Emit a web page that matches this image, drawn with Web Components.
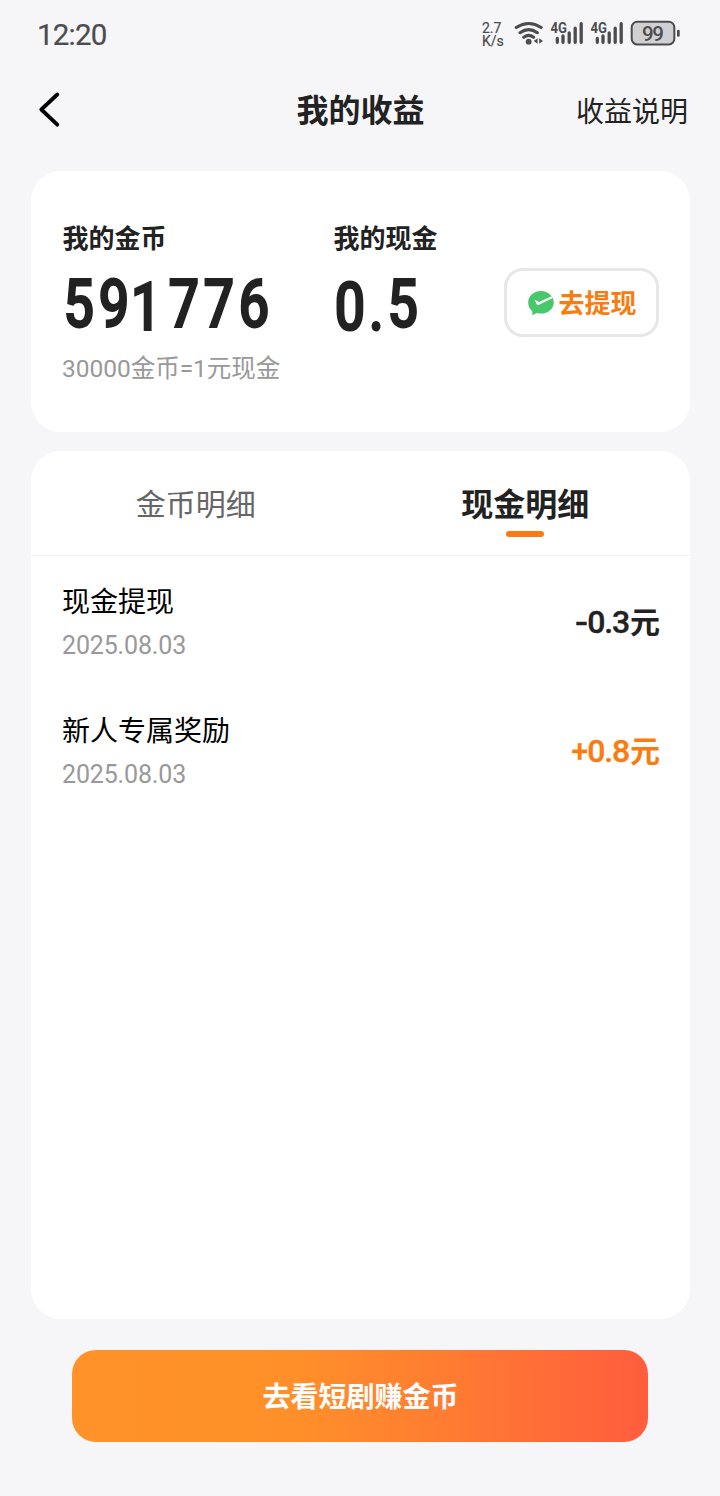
<!DOCTYPE html>
<html lang="zh-CN">
<head>
<meta charset="utf-8">
<title>我的收益</title>
<style>
html,body{margin:0;height:100%}
body{background:#f6f6f9;font-family:Roboto,"Noto Sans CJK SC",sans-serif;color:#222}
</style>
</head>
<body>
<earnings-page></earnings-page>
<script>
const define=(name,html,setup)=>{
  const t=document.createElement('template');
  t.innerHTML=html;
  customElements.define(name,class extends HTMLElement{
    constructor(){super();this.attachShadow({mode:'open'}).append(t.content.cloneNode(true));}
    connectedCallback(){if(setup)setup(this,this.shadowRoot);}
  });
};

define('signal-bars',`<style>:host{display:block;width:34px;height:24px}svg{display:block}</style>
<svg width="34" height="24" viewBox="0 0 34 24">
<text x="0.5" y="13" font-family="Roboto,sans-serif" font-weight="700" font-size="15" textLength="16.5" lengthAdjust="spacingAndGlyphs" fill="#4c4c4e">4G</text>
<g stroke="#4c4c4e" stroke-width="3.3" stroke-linecap="round"><path d="M7.300 18.500V22.300M13 15.800V22.300M19.200 12.800V22.300M25.200 8.200V22.300M31.200 3.600V22.300"/></g>
</svg>`);

define('status-bar',`<style>
:host{display:flex;height:68px;box-sizing:border-box;padding:0 39px 0 37px;justify-content:space-between;color:#4c4c4e}
.time{font-size:29.5px;line-height:70px;letter-spacing:-.8px;-webkit-text-stroke:.2px #4c4c4e}
.right{display:flex;padding-top:20px}
.speed{width:32px;font-size:14px;line-height:13px;padding-top:2px;-webkit-text-stroke:.2px #4c4c4e}
signal-bars{margin-right:6px}
svg{display:block}
</style>
<div class="time">12:20</div>
<div class="right">
<div class="speed">2.7<br>K/s</div>
<svg width="36" height="27" viewBox="0 0 36 27"><g fill="none" stroke="#4c4c4e" stroke-width="3.1" stroke-linecap="round"><path d="M2.2 7.500Q14.700-.5 27.200 7.500M6 12.700Q14.700 6.500 23.400 12.700M9.800 17.300Q14.700 13.500 19.600 17.300"/></g><circle cx="14.700" cy="21.700" r="2.900" fill="#4c4c4e"/><path fill="#4c4c4e" d="M19.700 21 23.600 18.300V23.800ZM29 21 25.200 18.300V23.800Z"/></svg>
<signal-bars></signal-bars><signal-bars></signal-bars>
<svg width="51" height="28" viewBox="0 0 51 28"><rect x="1.700" y="1.800" width="42.600" height="22.600" rx="5.500" fill="#d0d0d2" stroke="#4c4c4e" stroke-width="2"/><rect x="47" y="9.800" width="2.700" height="7" rx="1.200" fill="#4c4c4e"/><text x="12" y="20.600" font-family="Roboto,sans-serif" font-size="20.500" font-weight="500" textLength="22" fill="#4c4c4e">99</text></svg>
</div>`);

define('nav-bar',`<style>
:host{display:grid;grid-template-columns:180px 1fr 180px;align-items:center;height:84px;padding:0 32px 0 31px}
svg{display:block}
h1{margin:1px 0 0 2px;text-align:center;font-size:32px;font-weight:700;line-height:48px}
.help{margin-top:5px;text-align:right;font-size:28px;line-height:42px}
</style>
<svg width="36" height="48" viewBox="0 0 36 48"><path d="M26.300 8.500 10.300 23.500 26.300 38.700" fill="none" stroke="#000" stroke-width="3.800" stroke-linecap="round" stroke-linejoin="round"/></svg>
<h1><slot></slot></h1><div class="help"><slot name="help"></slot></div>`);

define('big-number',`<style>
:host{display:flex;height:60px;font-weight:500;font-size:67px;line-height:60px;color:#222}
span{display:flex;justify-content:center;width:35.100px}
i{font-style:normal;-webkit-text-stroke:1.8px #222;transform:scaleX(.81)}
.low i{transform:translateY(3px) scaleX(.81)}
.one i{transform:translate(-3px,3px) scaleX(.81)}
.dot{width:18px}
</style>`,(el,root)=>{
  for(const c of el.getAttribute('value')||''){
    const s=document.createElement('span'),i=document.createElement('i');
    i.textContent=c;s.append(i);
    if(c==='0')s.className='low';
    if(c==='1')s.className='one';
    if(c==='.')s.className='low dot';
    root.append(s);
  }
});

define('balance-item',`<style>
:host{display:block}
.label{font-size:26px;line-height:39px;font-weight:700;height:39px;padding-top:2px;margin-left:-.5px}
.value{margin:15px 0 0 -1.500px;height:60px}
.note{margin:17px 0 0 -1px;font-size:24.5px;line-height:36px;color:#999;white-space:nowrap;letter-spacing:-.03px}
</style>
<div class="label"><slot></slot></div><div class="value"></div><div class="note"><slot name="note"></slot></div>`,(el,root)=>{
  const b=document.createElement('big-number');
  b.setAttribute('value',el.getAttribute('value'));
  root.querySelector('.value').append(b);
});

define('withdraw-button',`<style>
:host{display:flex;box-sizing:border-box;width:155px;height:69px;border:3px solid #e7e7e7;border-radius:19px;align-items:center;justify-content:center;gap:4px;color:#f97c10;font-size:26px;font-weight:700;line-height:38px;padding-left:2px}
svg{display:block}
span{padding-top:3px}
</style>
<svg width="26" height="26" viewBox="0 0 26 26"><path fill="#47c86b" d="M13 1C5.800 1 .2 5.900.2 12.500c0 3.700 1.600 6.600 4 8.600L4.400 25.200l4.400-2.200c1.300.4 2.700.6 4.200.6 7.200 0 12.800-4.900 12.800-11.100S20.200 1 13 1Z"/><path fill="#fff" d="M6.600 9.700 11.100 11.900 24.300 6 25.200 7.700 11 14.700Q9.500 15.500 8.600 14Z"/></svg>
<span><slot></slot></span>`);

define('balance-card',`<style>
:host{display:grid;grid-template-columns:271px 1fr 155px;box-sizing:border-box;height:261px;padding:47px 31px 0 32px;border-radius:30px;background:#fff}
withdraw-button{margin-top:50px}
</style>
<balance-item value="591776">我的金币<span slot="note">30000金币=1元现金</span></balance-item>
<balance-item value="0.5">我的现金</balance-item>
<withdraw-button>去提现</withdraw-button>`);

define('tab-item',`<style>
:host{display:flex;flex-direction:column;align-items:center;padding-top:31px;font-size:30px;line-height:46px;color:#666}
:host([active]){font-size:32px;font-weight:700;color:#222}
i{display:none;width:38px;height:6px;border-radius:3px;background:#f97c10;margin-top:3px}
:host([active]) i{display:block}
</style><slot></slot><i></i>`);

define('record-row',`<style>
:host{display:flex;justify-content:space-between;align-items:center;height:129px;padding:0 30px 0 31px}
.title{font-size:28px;line-height:42px;color:#000;padding-top:2px}
.date{font-size:25px;line-height:36px;margin-top:4px;color:#999;letter-spacing:-.15px}
.sum{font-size:30px;line-height:44px;font-weight:700;padding-top:2px}
:host([plus]) .sum{color:#f97c10}
.num{font-size:32px;font-weight:500;letter-spacing:-1.200px;margin-right:1px;-webkit-text-stroke:.4px currentColor}
.minus{display:inline-block;transform:scaleX(1.200);margin-right:2px}
:host([plus]) .minus{transform:scaleX(.93);margin-right:0}
</style><div><div class="title"><slot></slot></div><div class="date"><slot name="date"></slot></div></div>
<div class="sum"><span class="num"><span class="minus"><slot name="sign"></slot></span><slot name="num"></slot></span>元</div>`);

define('records-card',`<style>
:host{display:block;box-sizing:border-box;height:868px;margin-top:19px;border-radius:30px;background:#fff}
.tabs{display:grid;grid-template-columns:1fr 1fr;height:104px;border-bottom:1px solid #f1f1f2;margin-bottom:1px}
</style>
<div class="tabs"><tab-item>金币明细</tab-item><tab-item active>现金明细</tab-item></div>
<record-row>现金提现<span slot="date">2025.08.03</span><span slot="sign">-</span><span slot="num">0.3</span></record-row>
<record-row plus>新人专属奖励<span slot="date">2025.08.03</span><span slot="sign">+</span><span slot="num">0.8</span></record-row>`);

define('action-button',`<style>
:host{display:flex;align-items:center;justify-content:center;height:92px;margin:31px 72px 0;border-radius:24px;background:linear-gradient(90deg,#ff9228 0%,#ff9029 38%,#ff8030 60%,#ff5d3e 100%);color:#fff;font-size:28px;font-weight:700;line-height:42px}
span{padding:4px 0 0 1px}
</style><span><slot></slot></span>`);

define('earnings-page',`<style>
:host{display:block;height:1496px;overflow:hidden}
main{padding:19px 30px 0 31px}
</style>
<status-bar></status-bar>
<nav-bar>我的收益<span slot="help">收益说明</span></nav-bar>
<main><balance-card></balance-card><records-card></records-card></main>
<action-button>去看短剧赚金币</action-button>`);
</script>
</body>
</html>
